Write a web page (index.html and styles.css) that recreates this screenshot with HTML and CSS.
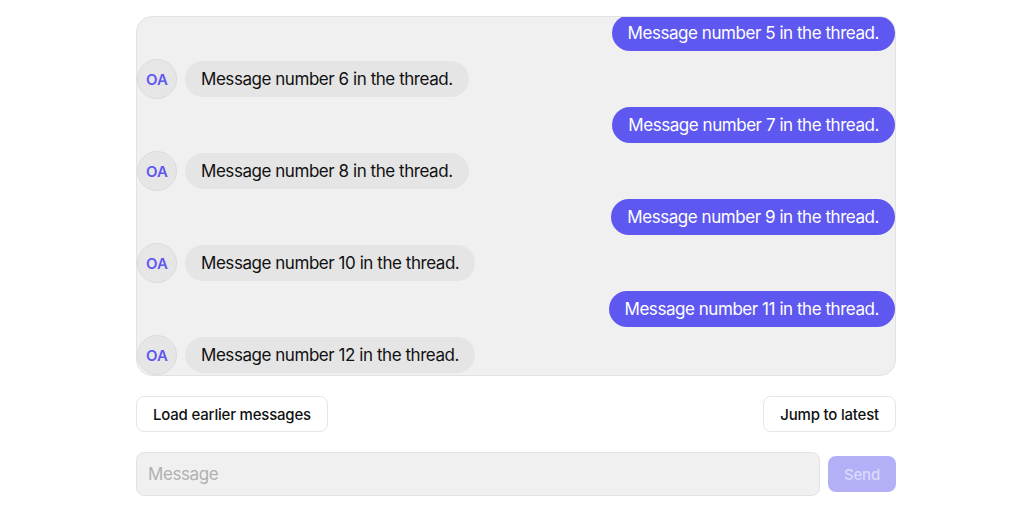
FILE: index.html
```html
<!DOCTYPE html>
<html lang="en">
<head>
<meta charset="utf-8">
<title>Thread</title>
<link rel="stylesheet" href="styles.css">
</head>
<body>
<main class="page">
  <section class="thread">
    <div class="row out"><div class="bubble bubble-out">Message number 5 in the thread.</div></div>
    <div class="row in"><div class="avatar">OA</div><div class="bubble bubble-in">Message number 6 in the thread.</div></div>
    <div class="row out"><div class="bubble bubble-out">Message number 7 in the thread.</div></div>
    <div class="row in"><div class="avatar">OA</div><div class="bubble bubble-in">Message number 8 in the thread.</div></div>
    <div class="row out"><div class="bubble bubble-out">Message number 9 in the thread.</div></div>
    <div class="row in"><div class="avatar">OA</div><div class="bubble bubble-in">Message number 10 in the thread.</div></div>
    <div class="row out"><div class="bubble bubble-out">Message number 11 in the thread.</div></div>
    <div class="row in"><div class="avatar">OA</div><div class="bubble bubble-in">Message number 12 in the thread.</div></div>
  </section>
  <div class="actions">
    <button class="btn" type="button">Load earlier messages</button>
    <button class="btn" type="button">Jump to latest</button>
  </div>
  <form class="composer">
    <input class="input" type="text" placeholder="Message">
    <button class="send" type="button" disabled>Send</button>
  </form>
</main>
</body>
</html>
```
FILE: styles.css
```css
* { box-sizing: border-box; }
html, body { margin: 0; background: #ffffff; }
body {
  font-family: "Inter", "Noto Sans", sans-serif;
  color: #111111;
}
.page {
  max-width: 760px;
  margin: 0 auto;
  padding-top: 16px;
  display: flex;
  flex-direction: column;
  gap: 20px;
}
.thread {
  height: 360px;
  overflow: hidden;
  background: #f0f0f0;
  border: 1px solid #e2e2e2;
  border-radius: 16px;
  display: flex;
  flex-direction: column;
  justify-content: flex-end;
  gap: 8px;
}
.row {
  display: flex;
  align-items: center;
  gap: 8px;
  flex-shrink: 0;
}
.row.out { justify-content: flex-end; }
.avatar {
  width: 40px;
  height: 40px;
  border-radius: 50%;
  background: #e6e6e6;
  border: 1px solid #dadada;
  color: #5e58f0;
  font-size: 15px;
  font-weight: 600;
  display: flex;
  align-items: center;
  justify-content: center;
  flex-shrink: 0;
}
.bubble {
  height: 36px;
  line-height: 36px;
  padding: 0 16px;
  border-radius: 18px;
  font-size: 17px;
  letter-spacing: -0.45px;
  white-space: nowrap;
}
.bubble-in { background: #e5e5e5; color: #111111; }
.bubble-out { background: #5e58f0; color: #ffffff; }
.actions {
  display: flex;
  justify-content: space-between;
}
.btn {
  height: 36px;
  padding: 0 16px;
  background: #ffffff;
  border: 1px solid #e6e6e6;
  border-radius: 8px;
  font-family: inherit;
  font-size: 15px;
  font-weight: 500;
  letter-spacing: -0.2px;
  color: #111111;
}
.composer {
  display: flex;
  align-items: center;
  gap: 8px;
  margin: 0;
}
.input {
  flex: 1;
  height: 44px;
  padding: 0 11px;
  background: #f0f0f0;
  border: 1px solid #e2e2e2;
  border-radius: 8px;
  font-family: inherit;
  font-size: 17px;
  letter-spacing: -0.4px;
  color: #111111;
  outline: none;
}
.input::placeholder { color: #b0b0b0; }
.send {
  width: 68px;
  height: 36px;
  border: none;
  border-radius: 8px;
  background: #b3b0f8;
  color: #dcdafc;
  font-family: inherit;
  font-size: 15px;
  font-weight: 500;
  letter-spacing: -0.2px;
}
```
